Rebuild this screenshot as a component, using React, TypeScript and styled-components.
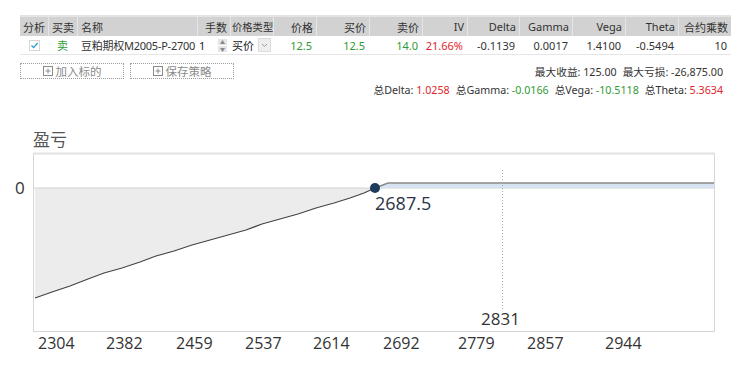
import React from "react";
import styled, { createGlobalStyle } from "styled-components";

const GlobalStyle = createGlobalStyle`
  body {
    margin: 0;
    background: #ffffff;
    font-family: "Noto Sans", "Noto Sans CJK SC", sans-serif;
  }
`;

const cols = "28px 29px 120px 33px 43px 43px 53px 53px 45px 52px 53px 53px 53px 53px";

const Page = styled.div`
  width: 746px;
  height: 375px;
  overflow: hidden;
  background: #fff;
`;

const Top = styled.div`
  height: 100px;
  padding: 15px 15px 0 20px;
  box-sizing: border-box;
`;

const Grid = styled.div`
  display: grid;
  grid-template-columns: ${cols};
  width: 711px;
`;

const HeadRow = styled(Grid)`
  height: 21px;
  background: #d2d2d2;
  border-top: 2px solid #e4e4e4;
  box-sizing: border-box;
`;

const HeadCell = styled.div<{ $align?: string; $tight?: boolean }>`
  display: flex;
  align-items: center;
  justify-content: ${(p) => p.$align || "flex-end"};
  padding: ${(p) => (p.$tight ? "0 0 0 1px" : "0 3px")};
  font-size: ${(p) => (p.$tight ? "10.3px" : "11px")};
  color: #333;
  border-left: 1px solid #e6e6e6;
  white-space: nowrap;
  overflow: hidden;
  &:first-child {
    border-left: none;
  }
`;

const BodyRow = styled(Grid)`
  height: 18px;
  border-bottom: 1px solid #e6e6e6;
`;

const Cell = styled.div<{ $align?: string; $color?: string }>`
  display: flex;
  align-items: center;
  justify-content: ${(p) => p.$align || "flex-end"};
  padding: 0 4px;
  font-size: 11px;
  color: ${(p) => p.$color || "#333"};
  white-space: nowrap;
  overflow: hidden;
`;

const NameCell = styled(Cell)`
  padding: 0 0 0 4px;
  justify-content: flex-start;
  letter-spacing: -0.25px;
`;

const Spinner = styled.div`
  display: flex;
  align-items: center;
  justify-content: space-between;
  padding: 0 3px 0 2px;
  font-size: 11px;
  color: #222;
`;

const Arrows = styled.div`
  display: flex;
  flex-direction: column;
  gap: 1px;
  width: 9px;
`;

const Arrow = styled.div`
  height: 6px;
  background: #e6e6e6;
  font-size: 5px;
  line-height: 6px;
  color: #888;
  text-align: center;
`;

const Select = styled.div`
  display: flex;
  align-items: center;
  justify-content: space-between;
  padding: 0 2px;
  font-size: 11px;
  color: #222;
`;

const SelectBtn = styled.div`
  width: 13px;
  height: 14px;
  box-sizing: border-box;
  background: #eeeeee;
  border: 1px solid #dcdcdc;
  display: flex;
  align-items: center;
  justify-content: center;
`;

const Toolbar = styled.div`
  display: flex;
  justify-content: space-between;
  width: 703px;
  margin-top: 8px;
`;

const Buttons = styled.div`
  display: flex;
  gap: 6px;
  align-items: flex-start;
`;

const DashButton = styled.div`
  width: 104px;
  height: 16px;
  box-sizing: border-box;
  border: 1px dotted #9a9a9a;
  display: flex;
  align-items: center;
  justify-content: center;
  gap: 3px;
  font-size: 11.5px;
  color: #8a8a8a;
`;

const Stats = styled.div`
  display: flex;
  flex-direction: column;
  align-items: flex-end;
  gap: 2px;
  margin-top: 1px;
`;

const StatLine = styled.div`
  display: flex;
  gap: 6px;
  font-size: 10.7px;
  line-height: 16px;
  color: #333;
`;

const Val = styled.span<{ $color?: string }>`
  color: ${(p) => p.$color || "#333"};
`;

const ChartTitle = styled.div`
  padding: 30px 0 0 33px;
  height: 50px;
  box-sizing: border-box;
  font-size: 17px;
  line-height: 20px;
  color: #555;
`;

const ChartSvg = styled.svg`
  display: block;
`;

const GREEN = "#2f9a35";
const RED = "#e0262b";

const linePts: [number, number][] = [
  [35, 298], [52, 292], [70, 286], [88, 279], [104, 273], [122, 268],
  [140, 262], [156, 256], [174, 251], [192, 245], [210, 240], [228, 235],
  [246, 230], [262, 224], [280, 219], [298, 214], [316, 208], [334, 203],
  [350, 198], [364, 193], [375, 188],
];

const xTicks = [
  { x: 38, t: "2304" }, { x: 106, t: "2382" }, { x: 176, t: "2459" },
  { x: 245, t: "2537" }, { x: 313, t: "2614" }, { x: 383, t: "2692" },
  { x: 458, t: "2779" }, { x: 527, t: "2857" }, { x: 605, t: "2944" },
];

function Check() {
  return (
    <svg width="11" height="11" viewBox="0 0 11 11">
      <rect x="0.5" y="0.5" width="10" height="10" fill="#fff" stroke="#d6d6d6" />
      <path d="M2.5 5.5 L4.6 7.6 L8.6 3" fill="none" stroke="#1e9ad0" strokeWidth="1.2" />
    </svg>
  );
}

function Chevron() {
  return (
    <svg width="7" height="5" viewBox="0 0 7 5">
      <path d="M1 1 L3.5 3.5 L6 1" fill="none" stroke="#9a9a9a" />
    </svg>
  );
}

function PlusBox() {
  return (
    <svg width="10" height="10" viewBox="0 0 10 10">
      <rect x="0.5" y="0.5" width="9" height="9" fill="none" stroke="#8a8a8a" />
      <path d="M5 2.5 V7.5 M2.5 5 H7.5" stroke="#8a8a8a" />
    </svg>
  );
}

function PnlChart() {
  const line = linePts.map((p) => p.join(",")).join(" ");
  const fill = `35,188 375,188 ${[...linePts].reverse().map((p) => p.join(",")).join(" ")}`;
  return (
    <ChartSvg width="746" height="225" viewBox="0 150 746 225">
      <rect x="33.5" y="153.5" width="681" height="178" fill="#fff" stroke="#d6d6d6" />
      <line x1="33" y1="153.5" x2="715" y2="153.5" stroke="#e2e2e2" strokeWidth="2" />
      <polygon points={fill} fill="#ececec" />
      <line x1="34" y1="188" x2="715" y2="188" stroke="#d2d2d2" />
      <polygon points="375,188 388,183 714,183 714,188" fill="#d5e3f2" />
      <polyline points={line} fill="none" stroke="#444" strokeWidth="1.2" />
      <polyline points="375,188 388,183 714,183" fill="none" stroke="#8a8a8a" strokeWidth="1.6" />
      <line x1="502.5" y1="170" x2="502.5" y2="310" stroke="#aaa" strokeDasharray="1 2" />
      <circle cx="375" cy="188" r="5" fill="#1e3a5c" />
      <text x="15" y="194" fontSize="17" fill="#333" fontFamily="Open Sans, sans-serif">0</text>
      <text x="375" y="210" fontSize="18" fill="#2b3545" fontFamily="Open Sans, sans-serif">2687.5</text>
      <text x="481" y="325" fontSize="17" fill="#333" fontFamily="Open Sans, sans-serif">2831</text>
      {xTicks.map((t) => (
        <text key={t.t} x={t.x} y="349" fontSize="16" fill="#333" fontFamily="Open Sans, sans-serif">
          {t.t}
        </text>
      ))}
    </ChartSvg>
  );
}

export default function App() {
  return (
    <Page>
      <GlobalStyle />
      <Top>
        <HeadRow>
          <HeadCell $align="flex-start">分析</HeadCell>
          <HeadCell $align="flex-start">买卖</HeadCell>
          <HeadCell $align="flex-start">名称</HeadCell>
          <HeadCell>手数</HeadCell>
          <HeadCell $align="flex-start" $tight>价格类型</HeadCell>
          <HeadCell>价格</HeadCell>
          <HeadCell>买价</HeadCell>
          <HeadCell>卖价</HeadCell>
          <HeadCell>IV</HeadCell>
          <HeadCell>Delta</HeadCell>
          <HeadCell>Gamma</HeadCell>
          <HeadCell>Vega</HeadCell>
          <HeadCell>Theta</HeadCell>
          <HeadCell>合约乘数</HeadCell>
        </HeadRow>
        <BodyRow>
          <Cell $align="center">
            <Check />
          </Cell>
          <Cell $align="center" $color={GREEN}>卖</Cell>
          <NameCell>豆粕期权M2005-P-2700</NameCell>
          <Spinner>
            <span>1</span>
            <Arrows>
              <Arrow>▲</Arrow>
              <Arrow>▼</Arrow>
            </Arrows>
          </Spinner>
          <Select>
            <span>买价</span>
            <SelectBtn>
              <Chevron />
            </SelectBtn>
          </Select>
          <Cell $color={GREEN}>12.5</Cell>
          <Cell $color={GREEN}>12.5</Cell>
          <Cell $color={GREEN}>14.0</Cell>
          <Cell $color={RED}>21.66%</Cell>
          <Cell>-0.1139</Cell>
          <Cell>0.0017</Cell>
          <Cell>1.4100</Cell>
          <Cell>-0.5494</Cell>
          <Cell>10</Cell>
        </BodyRow>
        <Toolbar>
          <Buttons>
            <DashButton>
              <PlusBox />
              加入标的
            </DashButton>
            <DashButton>
              <PlusBox />
              保存策略
            </DashButton>
          </Buttons>
          <Stats>
            <StatLine>
              <span>最大收益: 125.00</span>
              <span>最大亏损: -26,875.00</span>
            </StatLine>
            <StatLine>
              <span>总Delta: <Val $color={RED}>1.0258</Val></span>
              <span>总Gamma: <Val $color={GREEN}>-0.0166</Val></span>
              <span>总Vega: <Val $color={GREEN}>-10.5118</Val></span>
              <span>总Theta: <Val $color={RED}>5.3634</Val></span>
            </StatLine>
          </Stats>
        </Toolbar>
      </Top>
      <ChartTitle>盈亏</ChartTitle>
      <PnlChart />
    </Page>
  );
}
